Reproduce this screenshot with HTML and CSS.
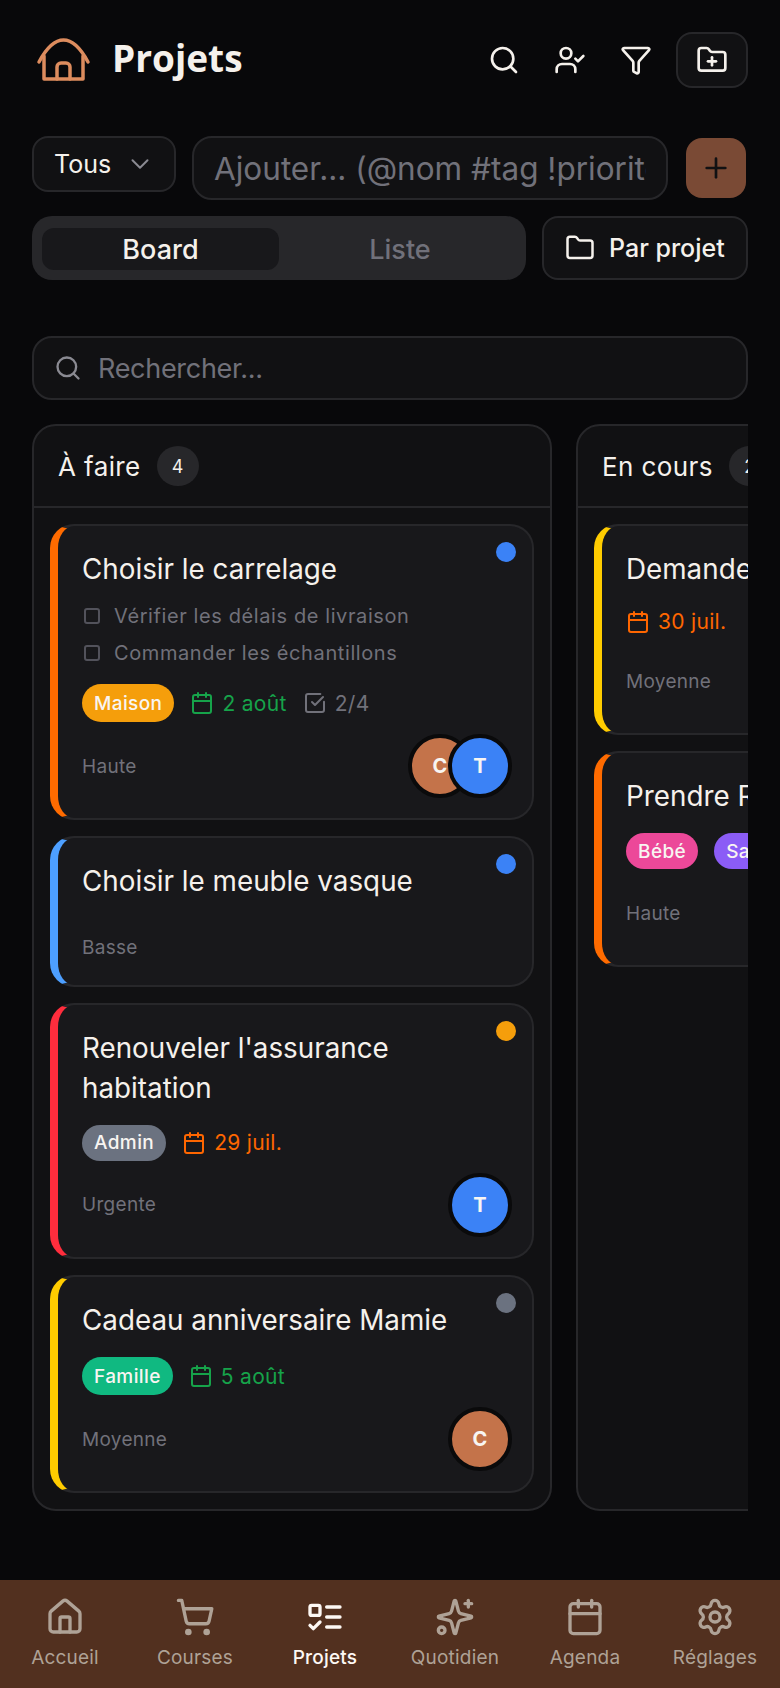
FILE: index.html
```html
<!DOCTYPE html>
<html lang="fr">
<head>
    <meta charset="UTF-8">
    <meta name="viewport" content="width=device-width, initial-scale=1.0">
    <title>Projets</title>
    <link rel="stylesheet" href="styles.css">
</head>
<body>

<svg class="sprite">
    <symbol id="i-search" viewBox="0 0 24 24"><circle cx="11" cy="11" r="8"/><path d="m21 21-4.3-4.3"/></symbol>
    <symbol id="i-user-check" viewBox="0 0 24 24"><path d="M16 21v-2a4 4 0 0 0-4-4H6a4 4 0 0 0-4 4v2"/><circle cx="9" cy="7" r="4"/><path d="m16 11 2 2 4-4"/></symbol>
    <symbol id="i-funnel" viewBox="0 0 24 24"><path d="M10 20a1 1 0 0 0 .553.895l2 1A1 1 0 0 0 14 21v-7a2 2 0 0 1 .517-1.341L21.74 4.67A1 1 0 0 0 21 3H3a1 1 0 0 0-.742 1.67l7.225 7.989A2 2 0 0 1 10 14z"/></symbol>
    <symbol id="i-folder-plus" viewBox="0 0 24 24"><path d="M12 10v6"/><path d="M9 13h6"/><path d="M20 20a2 2 0 0 0 2-2V8a2 2 0 0 0-2-2h-7.9a2 2 0 0 1-1.69-.9L9.6 3.9A2 2 0 0 0 7.93 3H4a2 2 0 0 0-2 2v13a2 2 0 0 0 2 2Z"/></symbol>
    <symbol id="i-folder" viewBox="0 0 24 24"><path d="M20 20a2 2 0 0 0 2-2V8a2 2 0 0 0-2-2h-7.9a2 2 0 0 1-1.69-.9L9.6 3.9A2 2 0 0 0 7.93 3H4a2 2 0 0 0-2 2v13a2 2 0 0 0 2 2Z"/></symbol>
    <symbol id="i-chevron" viewBox="0 0 24 24"><path d="m6 9 6 6 6-6"/></symbol>
    <symbol id="i-plus" viewBox="0 0 24 24"><path d="M5 12h14"/><path d="M12 5v14"/></symbol>
    <symbol id="i-calendar" viewBox="0 0 24 24"><path d="M8 2v4"/><path d="M16 2v4"/><rect x="3" y="4" width="18" height="18" rx="2"/><path d="M3 10h18"/></symbol>
    <symbol id="i-check" viewBox="0 0 24 24"><path d="M21 10.66V19a2 2 0 0 1-2 2H5a2 2 0 0 1-2-2V5a2 2 0 0 1 2-2h12.34"/><path d="m9 11 3 3 8-8"/></symbol>
    <symbol id="i-house" viewBox="0 0 24 24"><path d="M15 21v-8a1 1 0 0 0-1-1h-4a1 1 0 0 0-1 1v8"/><path d="M3 10a2 2 0 0 1 .709-1.528l7-5.999a2 2 0 0 1 2.582 0l7 5.999A2 2 0 0 1 21 10v9a2 2 0 0 1-2 2H5a2 2 0 0 1-2-2z"/></symbol>
    <symbol id="i-cart" viewBox="0 0 24 24"><circle cx="8" cy="21" r="1"/><circle cx="19" cy="21" r="1"/><path d="M2.05 2.05h2l2.66 12.42a2 2 0 0 0 2 1.58h9.78a2 2 0 0 0 1.95-1.57l1.65-7.43H5.12"/></symbol>
    <symbol id="i-todo" viewBox="0 0 24 24"><rect x="3" y="5" width="6" height="6" rx="1"/><path d="m3 17 2 2 4-4"/><path d="M13 6h8"/><path d="M13 12h8"/><path d="M13 18h8"/></symbol>
    <symbol id="i-sparkles" viewBox="0 0 24 24"><path d="M9.937 15.5A2 2 0 0 0 8.5 14.063l-6.135-1.582a.5.5 0 0 1 0-.962L8.5 9.936A2 2 0 0 0 9.937 8.5l1.582-6.135a.5.5 0 0 1 .963 0L14.063 8.5A2 2 0 0 0 15.5 9.937l6.135 1.581a.5.5 0 0 1 0 .964L15.5 14.063a2 2 0 0 0-1.437 1.437l-1.582 6.135a.5.5 0 0 1-.963 0z"/><path d="M20 2v4"/><path d="M22 4h-4"/><circle cx="4" cy="20" r="2"/></symbol>
    <symbol id="i-settings" viewBox="0 0 24 24"><path d="M9.671 4.136a2.34 2.34 0 0 1 4.659 0 2.34 2.34 0 0 0 3.319 1.915 2.34 2.34 0 0 1 2.33 4.033 2.34 2.34 0 0 0 0 3.831 2.34 2.34 0 0 1-2.33 4.033 2.34 2.34 0 0 0-3.319 1.915 2.34 2.34 0 0 1-4.659 0 2.34 2.34 0 0 0-3.32-1.915 2.34 2.34 0 0 1-2.33-4.033 2.34 2.34 0 0 0 0-3.831A2.34 2.34 0 0 1 6.35 6.051a2.34 2.34 0 0 0 3.319-1.915"/><circle cx="12" cy="12" r="3"/></symbol>
</svg>

<div class="app">
    <main class="main">
        <header class="top-bar">
            <div class="brand">
                <svg class="logo" viewBox="0 0 56 46">
                    <path d="M3 25C11 10 19 3 27.500 3S44 10 52 25"/>
                    <path d="M8 19V42H47V19"/>
                    <path d="M21 42V30a4 4 0 0 1 4-4h5a4 4 0 0 1 4 4V42"/>
                </svg>
                <h1 class="page-title">Projets</h1>
            </div>
            <div class="top-actions">
                <button class="icon-btn"><svg class="icon"><use href="#i-search"/></svg></button>
                <button class="icon-btn"><svg class="icon"><use href="#i-user-check"/></svg></button>
                <button class="icon-btn"><svg class="icon"><use href="#i-funnel"/></svg></button>
                <button class="folder-btn"><svg class="icon"><use href="#i-folder-plus"/></svg></button>
            </div>
        </header>

        <div class="add-row">
            <div class="select">Tous <svg class="chevron"><use href="#i-chevron"/></svg></div>
            <input class="add-input" type="text" placeholder="Ajouter... (@nom #tag !priorité)">
            <button class="add-btn"><svg class="add-icon"><use href="#i-plus"/></svg></button>
        </div>

        <div class="view-row">
            <div class="tabs">
                <div class="tab tab-active">Board</div>
                <div class="tab tab-idle">Liste</div>
            </div>
            <button class="group-btn"><svg class="group-icon"><use href="#i-folder"/></svg> Par projet</button>
        </div>

        <div class="search">
            <svg class="search-icon"><use href="#i-search"/></svg>
            <input class="search-input" type="text" placeholder="Rechercher...">
        </div>

        <div class="board">
            <section class="column">
                <div class="column-head">
                    <span class="column-title">À faire</span>
                    <span class="count">4</span>
                </div>
                <div class="column-body">
                    <article class="card edge-orange">
                        <span class="dot dot-blue"></span>
                        <h3 class="card-title">Choisir le carrelage</h3>
                        <ul class="checklist">
                            <li><span class="box"></span>Vérifier les délais de livraison</li>
                            <li><span class="box"></span>Commander les échantillons</li>
                        </ul>
                        <div class="meta">
                            <span class="tag tag-tall bg-amber">Maison</span>
                            <span class="date green"><svg class="small-icon"><use href="#i-calendar"/></svg>2 août</span>
                            <span class="date grey"><svg class="small-icon"><use href="#i-check"/></svg>2/4</span>
                        </div>
                        <div class="card-foot">
                            <span class="priority">Haute</span>
                            <div class="avatars">
                                <span class="avatar bg-clay">C</span>
                                <span class="avatar bg-blue">T</span>
                            </div>
                        </div>
                    </article>

                    <article class="card edge-blue">
                        <span class="dot dot-blue"></span>
                        <h3 class="card-title">Choisir le meuble vasque</h3>
                        <div class="card-foot">
                            <span class="priority">Basse</span>
                        </div>
                    </article>

                    <article class="card edge-red">
                        <span class="dot dot-amber"></span>
                        <h3 class="card-title">Renouveler l'assurance habitation</h3>
                        <div class="meta">
                            <span class="tag bg-grey">Admin</span>
                            <span class="date orange"><svg class="small-icon"><use href="#i-calendar"/></svg>29 juil.</span>
                        </div>
                        <div class="card-foot">
                            <span class="priority">Urgente</span>
                            <div class="avatars">
                                <span class="avatar bg-blue">T</span>
                            </div>
                        </div>
                    </article>

                    <article class="card edge-yellow">
                        <span class="dot dot-grey"></span>
                        <h3 class="card-title">Cadeau anniversaire Mamie</h3>
                        <div class="meta">
                            <span class="tag tag-tall bg-green">Famille</span>
                            <span class="date green"><svg class="small-icon"><use href="#i-calendar"/></svg>5 août</span>
                        </div>
                        <div class="card-foot">
                            <span class="priority">Moyenne</span>
                            <div class="avatars">
                                <span class="avatar bg-clay">C</span>
                            </div>
                        </div>
                    </article>
                </div>
            </section>

            <section class="column">
                <div class="column-head">
                    <span class="column-title">En cours</span>
                    <span class="count">2</span>
                </div>
                <div class="column-body">
                    <article class="card edge-yellow">
                        <h3 class="card-title">Demander un devis</h3>
                        <div class="meta">
                            <span class="date orange"><svg class="small-icon"><use href="#i-calendar"/></svg>30 juil.</span>
                        </div>
                        <div class="card-foot">
                            <span class="priority">Moyenne</span>
                            <div class="avatars">
                                <span class="avatar bg-blue">T</span>
                            </div>
                        </div>
                    </article>

                    <article class="card edge-orange">
                        <h3 class="card-title">Prendre RDV pédiatre</h3>
                        <div class="meta">
                            <span class="tag bg-pink">Bébé</span>
                            <span class="tag bg-violet">Santé</span>
                        </div>
                        <div class="card-foot">
                            <span class="priority">Haute</span>
                            <div class="avatars">
                                <span class="avatar bg-clay">C</span>
                            </div>
                        </div>
                    </article>
                </div>
            </section>
        </div>
    </main>

    <nav class="bottom-nav">
        <a class="nav-item"><svg class="nav-icon"><use href="#i-house"/></svg>Accueil</a>
        <a class="nav-item"><svg class="nav-icon"><use href="#i-cart"/></svg>Courses</a>
        <a class="nav-item nav-active"><svg class="nav-icon"><use href="#i-todo"/></svg>Projets</a>
        <a class="nav-item"><svg class="nav-icon"><use href="#i-sparkles"/></svg>Quotidien</a>
        <a class="nav-item"><svg class="nav-icon"><use href="#i-calendar"/></svg>Agenda</a>
        <a class="nav-item"><svg class="nav-icon"><use href="#i-settings"/></svg>Réglages</a>
    </nav>
</div>

</body>
</html>
```

FILE: styles.css
```css
* {
    box-sizing: border-box;
}
body {
    margin: 0;
    background-color: #08080a;
    color: #f5f1ec;
    font-family: Inter, "Noto Sans", sans-serif;
}
button {
    font-family: inherit;
    color: inherit;
    background: none;
    border: none;
    padding: 0;
}
input {
    font-family: inherit;
    background: none;
    border: none;
    outline: none;
    min-width: 0;
}
input::placeholder {
    color: #71717a;
    opacity: 1;
}
svg {
    fill: none;
    stroke: currentColor;
    stroke-width: 2;
    stroke-linecap: round;
    stroke-linejoin: round;
    flex-shrink: 0;
}
.sprite {
    display: none;
}
.app {
    display: flex;
    flex-direction: column;
    height: 1688px;
    overflow: hidden;
}
.main {
    flex: 1;
    padding: 32px 32px 0;
}

/* top bar */
.top-bar {
    display: flex;
    justify-content: space-between;
    align-items: center;
    height: 56px;
}
.brand {
    display: flex;
    align-items: center;
    gap: 20px;
    padding-left: 4px;
}
.logo {
    width: 56px;
    height: 46px;
    color: #dd8c5e;
    stroke-width: 3.5;
}
.page-title {
    margin: 0 0 6px;
    font-family: "Open Sans", sans-serif;
    font-size: 37px;
    font-weight: 700;
}
.top-actions {
    display: flex;
    align-items: center;
    gap: 2px;
}
.icon-btn {
    display: flex;
    justify-content: center;
    width: 64px;
}
.icon {
    width: 32px;
    height: 32px;
}
.folder-btn {
    display: flex;
    justify-content: center;
    align-items: center;
    width: 72px;
    height: 56px;
    margin-left: 6px;
    background-color: #111113;
    border: 2px solid #27272a;
    border-radius: 16px;
}

/* add row */
.add-row {
    display: flex;
    align-items: flex-start;
    margin-top: 48px;
}
.select {
    display: flex;
    align-items: center;
    justify-content: space-between;
    width: 144px;
    height: 56px;
    padding: 0 19px 0 20px;
    font-size: 25px;
    background-color: #111113;
    border: 2px solid #27272a;
    border-radius: 16px;
}
.chevron {
    width: 30px;
    height: 30px;
    color: #8a8a92;
    stroke-width: 1.6;
}
.add-input {
    flex: 1;
    height: 64px;
    margin: 0 18px 0 16px;
    padding: 0 20px;
    font-size: 31.5px;
    color: #f5f1ec;
    background-color: #111113;
    border: 2px solid #27272a;
    border-radius: 20px;
}
.add-btn {
    display: flex;
    justify-content: center;
    align-items: center;
    width: 60px;
    height: 60px;
    margin: 2px 2px 0 0;
    background-color: #7a4a35;
    border-radius: 16px;
}
.add-icon {
    width: 32px;
    height: 32px;
    color: #111113;
}

/* view switch */
.view-row {
    display: flex;
    gap: 16px;
    margin-top: 16px;
}
.tabs {
    display: flex;
    width: 494px;
    height: 64px;
    padding: 12px 10px 10px;
    background-color: #27272a;
    border-radius: 20px;
}
.tab {
    flex: 1 1 0;
    display: flex;
    justify-content: center;
    align-items: center;
    font-size: 27px;
    font-weight: 500;
    color: #71717a;
    border-radius: 12px;
}
.tab-active {
    color: #f5f1ec;
    background-color: #18181b;
}
.tab-idle {
    text-indent: 5px;
}
.group-btn {
    flex: 1;
    display: flex;
    align-items: center;
    gap: 14px;
    padding-left: 21px;
    font-size: 25px;
    font-weight: 500;
    background-color: #111113;
    border: 2px solid #27272a;
    border-radius: 16px;
}
.group-icon {
    width: 30px;
    height: 30px;
}

/* search */
.search {
    display: flex;
    align-items: center;
    gap: 14px;
    height: 64px;
    margin-top: 56px;
    padding: 0 20px;
    background-color: #111113;
    border: 2px solid #27272a;
    border-radius: 20px;
}
.search-icon {
    width: 28px;
    height: 28px;
    color: #8a8a92;
}
.search-input {
    flex: 1;
    font-size: 27px;
    letter-spacing: -.3px;
    color: #f5f1ec;
}

/* board */
.board {
    display: flex;
    gap: 24px;
    margin-top: 24px;
    overflow: hidden;
}
.column {
    flex: 0 0 520px;
    background-color: #111113;
    border: 2px solid #27272a;
    border-radius: 24px;
}
.column-head {
    display: flex;
    align-items: center;
    gap: 16px;
    height: 82px;
    padding: 0 24px;
    border-bottom: 2px solid #27272a;
}
.column-title {
    font-size: 26px;
    letter-spacing: .4px;
}
.count {
    display: flex;
    justify-content: center;
    align-items: center;
    width: 42px;
    height: 40px;
    font-size: 18px;
    background-color: #27272a;
    border-radius: 50%;
}
.column-body {
    display: flex;
    flex-direction: column;
    gap: 16px;
    padding: 16px;
}
.card {
    position: relative;
    padding: 24px 20px 20px 24px;
    background-color: #18181b;
    border: 2px solid #27272a;
    border-left-width: 8px;
    border-radius: 24px;
}
.edge-orange { border-left-color: #ff6b00; }
.edge-blue { border-left-color: #4d9fff; }
.edge-red { border-left-color: #ff2d3d; }
.edge-yellow { border-left-color: #ffcc00; }
.dot {
    position: absolute;
    top: 16px;
    right: 16px;
    width: 20px;
    height: 20px;
    border-radius: 50%;
}
.dot-blue { background-color: #3b82f6; }
.dot-amber { background-color: #f59e0b; }
.dot-grey { background-color: #6b7280; }
.card-title {
    margin: 0 0 17px;
    font-size: 27.8px;
    font-weight: 400;
    line-height: 39.2px;
}
.checklist {
    display: flex;
    flex-direction: column;
    gap: 9px;
    margin: -4px 0 17px;
    padding: 0;
    list-style: none;
}
.checklist li {
    display: flex;
    align-items: center;
    gap: 14px;
    padding-left: 2px;
    font-size: 20px;
    letter-spacing: .6px;
    line-height: 28px;
    color: #71717a;
}
.box {
    width: 16px;
    height: 16px;
    border: 2px solid #52525b;
    border-radius: 3px;
}
.meta {
    display: flex;
    align-items: center;
    gap: 16px;
    min-height: 31px;
}
.tag {
    display: flex;
    align-items: center;
    height: 36px;
    padding: 0 12px;
    font-size: 19px;
    font-weight: 500;
    letter-spacing: .4px;
    color: #f8f5f2;
    border-radius: 18px;
}
.tag-tall {
    height: 38px;
    border-radius: 19px;
}
.bg-amber { background-color: #f59e0b; }
.bg-grey { background-color: #6b7280; }
.bg-green { background-color: #10b981; }
.bg-pink { background-color: #ec4899; }
.bg-violet { background-color: #8b5cf6; }
.date {
    display: flex;
    align-items: center;
    gap: 8px;
    font-size: 21px;
    letter-spacing: .3px;
}
.green { color: #16a34a; }
.orange { color: #ff6600; }
.grey { color: #71717a; }
.small-icon {
    width: 24px;
    height: 24px;
}
.card-foot {
    display: flex;
    justify-content: space-between;
    align-items: center;
    min-height: 36px;
    margin-top: 28px;
}
.meta + .card-foot {
    margin-top: 12px;
}
.priority {
    font-size: 19px;
    letter-spacing: .3px;
    color: #71717a;
}
.avatars {
    display: flex;
}
.avatar {
    display: flex;
    justify-content: center;
    align-items: center;
    width: 64px;
    height: 64px;
    font-size: 20px;
    font-weight: 700;
    color: #f8f5f2;
    border: 4px solid #0a0a0b;
    border-radius: 50%;
}
.avatar + .avatar {
    margin-left: -24px;
}
.bg-clay { background-color: #c4734a; }
.bg-blue { background-color: #3b82f6; }

/* bottom nav */
.bottom-nav {
    display: flex;
    height: 108px;
    padding-top: 17px;
    background-color: #52301f;
}
.nav-item {
    flex: 1;
    display: flex;
    flex-direction: column;
    align-items: center;
    gap: 9px;
    font-size: 19px;
    letter-spacing: .2px;
    color: #afa296;
}
.nav-active {
    color: #fdf8f4;
    font-weight: 500;
}
.nav-icon {
    width: 40px;
    height: 40px;
}
```
